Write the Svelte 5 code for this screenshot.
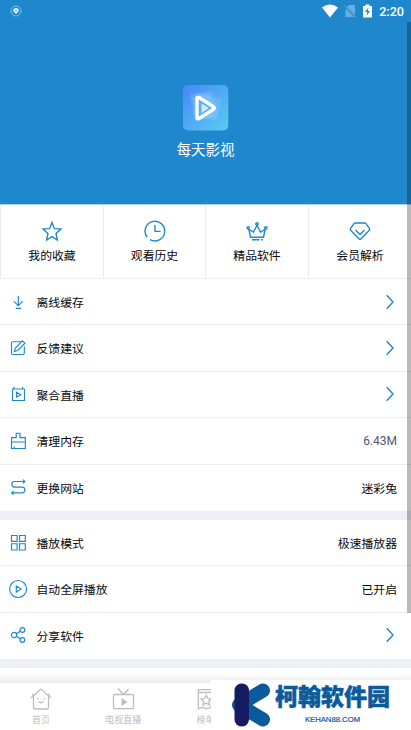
<script>
  const shortcuts = [
    { label: '我的收藏', icon: 'star' },
    { label: '观看历史', icon: 'clock' },
    { label: '精品软件', icon: 'crown' },
    { label: '会员解析', icon: 'gem' },
  ];

  const groups = [
    [
      { label: '离线缓存', icon: 'download' },
      { label: '反馈建议', icon: 'edit' },
      { label: '聚合直播', icon: 'live' },
      { label: '清理内存', icon: 'clean', value: '6.43M', muted: true },
      { label: '更换网站', icon: 'swap', value: '迷彩兔' },
    ],
    [
      { label: '播放模式', icon: 'modes', value: '极速播放器' },
      { label: '自动全屏播放', icon: 'play', value: '已开启' },
      { label: '分享软件', icon: 'share' },
    ],
  ];

  const tabs = [
    { label: '首页', icon: 'home' },
    { label: '电视直播', icon: 'tv' },
    { label: '榜单', icon: 'rank' },
    { label: '', icon: '' },
    { label: '', icon: '' },
  ];

  const icons = {
    star: 'M12 3.500l2.400 6.200 6.600.4-5 4.300 1.400 6.600-5.400-3.400-5.400 3.400 1.400-6.600-5-4.300 6.600-.4z',
    clock: 'M4.200 18.200A9.800 9.800 0 1 1 7 20.600M12 6v6.400h5.500',
    crown: 'M5.500 18.200h13l1.600-7.700-4.500 2.600L12 6.400l-3.600 6.700-4.500-2.600zM7 20.800h7.500M16 20.800h2M10.800 5a1.200 1.200 0 1 0 2.400 0 1.200 1.200 0 1 0-2.400 0M2 8.800a1.200 1.200 0 1 0 2.400 0A1.200 1.200 0 1 0 2 8.800M19.600 8.800a1.200 1.200 0 1 0 2.400 0 1.200 1.200 0 1 0-2.400 0',
    gem: 'M7.500 4h9q1 0 1.500.7l3.500 5q.5.8-.2 1.500l-8.400 8.700q-.9.800-1.800 0L2.700 11.200q-.7-.7-.2-1.500l3.500-5q.5-.7 1.500-.7zM7.500 11l4.500 4.600 4.500-4.600',
    download: 'M12.300 6v9.500M8 11.300l4.300 4.400 4.300-4.400M9.700 18.300h5.300',
    edit: 'M15 5.700H7q-1.500 0-1.500 1.500v9.800q0 1.500 1.500 1.500h9.800q1.500 0 1.500-1.500V10.500M9.300 12.200l7.200-7.300 2.400 2.300-7.200 7.300-3.200 1z',
    live: 'M6.500 7h11.500q.5 0 .5.500v11H6.500zM8 4.800V7M16.500 4.800V7M10.500 10.300v4.800l4.300-2.400z',
    clean: 'M5.500 13V8.600h4.700V4.200h3.800v4.400h5.300V13zM5.500 13v6.500h13.800V13M8.300 19.500v-2',
    swap: 'M19 6.500H8.700a2.800 2.800 0 0 0 0 5.600h7.300a2.900 2.900 0 0 1 0 5.800H5.500M17 4.700L18.900 6.500 17 8.300M7.500 16.100L5.600 17.900l1.900 1.800',
    modes: 'M5.500 4.500h5.600v5.800H5.500zM13.500 4.500h5.800v5.800h-5.800zM5.500 12.700h5.600v6.300H5.500zM13.500 12.700h5.800v6.300h-5.800z',
    play: 'M3.600 12a8.500 8.500 0 1 0 17 0 8.500 8.500 0 1 0-17 0M10.300 9v6.200l4.800-3.100z',
    share: 'M5.500 12a2.600 2.600 0 1 0 5.200 0 2.600 2.600 0 1 0-5.200 0M14 7a2.400 2.400 0 1 0 4.800 0 2.400 2.400 0 1 0-4.800 0M14 17a2.400 2.400 0 1 0 4.800 0 2.400 2.400 0 1 0-4.800 0M10.400 10.700l3.900-2.500M10.400 13.300l3.900 2.500',
    home: 'M2 12L12 3l10 9M4.500 10.500V21q0 2 2 2h11q2 0 2-2V10.500M3.700 9.500V7.500M20.300 9.500V7.500M9 12v1.500M15 12v1.500M9.500 15.500q2.500 2.400 5 0',
    tv: 'M3.500 8.500h18q1 0 1 1v12.200q0 1-1 1h-18q-1 0-1-1V9.500q0-1 1-1zM7 2.500l5.500 6 5-5.500',
    rank: 'M4.300 3.600h16v19.200l-4-1.400-4 1.400-4-1.400-4 1.400zM4.300 6.500h16M12.300 9.200l1.600 3.300 3.600.4-2.700 2.400.8 3.700-3.300-1.900-3.300 1.900.8-3.700-2.700-2.400 3.600-.4z',
  };
</script>

<div class="app">
  <header class="hero">
    <div class="status">
      <svg class="notice" width="12" height="12" viewBox="0 0 12 12">
        <circle cx="6" cy="6" r="5" fill="none" stroke="#8fc8ee" stroke-width=".8" />
        <path d="M3.500 4L6 3l2.500 1v2.500L6 9 3.500 6.500z" fill="#fff" />
        <circle cx="6" cy="5.500" r=".8" fill="#1f88cd" />
      </svg>
      <svg width="16" height="14" viewBox="0 0 16 14">
        <path d="M0 3.500Q8-2.500 16 3.500L8 13.500z" fill="#fff" />
      </svg>
      <svg class="sim" width="12" height="14" viewBox="0 0 12 14">
        <path d="M4.500 1H11v10L3 3zM1.500 4.500L10 13H1.500z" fill="#67afdf" />
        <path d="M.5 1.500l11 11.500" stroke="#67afdf" />
      </svg>
      <svg class="battery" width="9" height="14" viewBox="0 0 9 14">
        <path d="M0 2h2.500V.5h4V2H9v11.500H0z" fill="#fff" />
        <path d="M5.500 3.500L2 8h2.200L3.500 12 7 7H4.800z" fill="#1f88cd" />
      </svg>
      <span class="time">2:20</span>
    </div>
    <svg class="logo" width="46" height="46" viewBox="0 0 46 46">
      <defs>
        <linearGradient id="logo-bg" x1="0" y1="0" x2="1" y2="1">
          <stop offset="0" stop-color="#4a86f8" />
          <stop offset="1" stop-color="#59cdf0" />
        </linearGradient>
      </defs>
      <rect width="45.300" height="45.500" rx="5" fill="url(#logo-bg)" />
      <g fill="#a3d8ff" fill-opacity=".2">
        <path d="M7 9l20-3 4 26-20 3z" />
        <path d="M9 12l21-5 6 24-21 5z" />
        <path d="M15 8l24 6-6 22-23-6z" />
      </g>
      <path d="M14 13.500q0-2 2-1l14.500 9.200q1.600 1.300 0 2.600L16 33.500q-2 1-2-1z" fill="#5aaeff" stroke="#fff" stroke-width="3.400" stroke-linejoin="round" />
      <path d="M18.500 18.500l7.500 4.500-7.500 5z" fill="#d5ecff" />
    </svg>
    <h1>每天影视</h1>
  </header>

  <section class="shortcuts">
    {#each shortcuts as item}
      <div class="shortcut">
        <svg class="icon" width="24" height="24" viewBox="0 0 24 24"><path d={icons[item.icon]} /></svg>
        <span>{item.label}</span>
      </div>
    {/each}
  </section>

  {#each groups as rows}
    <section class="group">
      {#each rows as row}
        <div class="row">
          <svg class="icon thin" width="24" height="24" viewBox="0 0 24 24"><path d={icons[row.icon]} /></svg>
          <span class="label">{row.label}</span>
          {#if row.value}
            <span class="value" class:muted={row.muted}>{row.value}</span>
          {:else}
            <svg class="arrow" width="8" height="16" viewBox="0 0 8 16"><path d="M.7 1.200L7 8 .7 14.800" /></svg>
          {/if}
        </div>
      {/each}
    </section>
  {/each}

  <div class="fade"></div>
  <nav>
    {#each tabs as tab}
      <div class="tab">
        {#if tab.icon}
          <svg width="24" height="26" viewBox="0 0 24 26">
            <path d={icons[tab.icon]} />
            {#if tab.icon === 'tv'}
              <path class="solid" d="M10.500 12v8l6-4z" />
            {/if}
          </svg>
          <span>{tab.label}</span>
        {/if}
      </div>
    {/each}
  </nav>

  <div class="scrollbar"></div>

  <div class="banner">
    <svg width="40" height="44" viewBox="0 0 40 44">
      <path d="M32 7.500L8 22l24 14.500" fill="none" stroke="#0b5a9b" stroke-width="14" stroke-linecap="round" stroke-linejoin="round" />
      <rect x="3.500" y=".5" width="14.500" height="43" rx="7" fill="#171c62" />
    </svg>
    <div class="brand">
      <b>柯翰软件园</b>
      <small>KEHAN88.COM</small>
    </div>
  </div>
</div>

<style>
  :global(body) {
    margin: 0;
    overflow: hidden;
  }

  .app {
    position: relative;
    display: flex;
    flex-direction: column;
    width: 411px;
    height: 730px;
    overflow: hidden;
    background: #fff;
    color: #080808;
    font-family: Roboto, 'Noto Sans CJK SC', sans-serif;
    font-size: 11.85px;
  }

  .hero {
    display: flex;
    flex: none;
    flex-direction: column;
    align-items: center;
    box-sizing: border-box;
    height: 205px;
    border-bottom: 1px solid #a5d1ee;
    background: #1f88cd;
    color: #fff;
  }

  .status {
    display: flex;
    align-items: center;
    box-sizing: border-box;
    width: 100%;
    height: 22px;
    padding: 0 7px 0 10px;
  }

  .notice {
    margin-right: auto;
  }

  .sim {
    margin-left: 6px;
  }

  .battery {
    margin: 0 7px 0 7px;
  }

  .time {
    font-size: 12.6px;
    font-weight: 500;
    line-height: 22px;
    padding-top: 1px;
  }

  .logo {
    margin-top: 63px;
  }

  h1 {
    margin: 9px 0 0;
    font-size: 14.4px;
    font-weight: 400;
    line-height: 22px;
  }

  .shortcuts {
    display: grid;
    flex: none;
    grid-template-columns: 103px 102px 103px 103px;
    box-sizing: border-box;
    height: 74px;
    border-bottom: 1px solid #ebebf0;
  }

  .shortcut {
    display: flex;
    flex-direction: column;
    align-items: center;
    padding-top: 14px;
    border-left: 1px solid #ebebf0;
    line-height: 18px;
  }

  .shortcut span {
    margin-top: 4px;
  }

  .icon {
    fill: none;
    stroke: #1f88cd;
    stroke-width: 1.4;
  }

  .thin {
    stroke-width: 1.15;
  }

  .group {
    flex: none;
    border-bottom: 9px solid #eeeef5;
  }

  .row {
    display: flex;
    align-items: center;
    box-sizing: border-box;
    height: 46.4px;
    padding: 0 14px 0 6px;
    border-bottom: 1px solid #ececef;
  }

  .row:last-child {
    border-bottom-color: #fff;
  }

  .label {
    margin-left: 6.5px;
    margin-right: auto;
  }

  .label,
  .value {
    padding-bottom: 0.5px;
  }

  .muted {
    color: #55556b;
    font-size: 12px;
  }

  .arrow {
    margin-right: 3px;
    fill: none;
    stroke: #1f88cd;
    stroke-width: 1.4;
  }

  .fade {
    flex: none;
    height: 9px;
    margin-top: 6px;
    background: linear-gradient(#fff, #eaeaea);
  }

  nav {
    display: flex;
    flex: 1;
    background: #fff;
  }

  .tab {
    display: flex;
    flex: 1;
    flex-direction: column;
    align-items: center;
    padding-top: 3px;
    color: #bdbdbd;
    font-size: 9px;
    line-height: 14px;
  }

  .tab span {
    margin-top: 1px;
  }

  .tab svg {
    fill: none;
    stroke: #bdbdbd;
    stroke-width: 1.3;
  }

  .tab .solid {
    fill: #bdbdbd;
    stroke: none;
  }

  .scrollbar {
    position: absolute;
    top: 22px;
    right: 0;
    width: 4px;
    height: 591px;
    background: rgba(0, 0, 0, 0.27);
  }

  /* promo badge floating over the tab bar */
  .banner {
    position: absolute;
    right: 0;
    bottom: 0;
    display: flex;
    box-sizing: border-box;
    width: 200px;
    height: 50px;
    padding: 3px 0 0 20px;
    background: #fff;
    color: #0b5a9b;
  }

  .brand {
    display: flex;
    flex-direction: column;
    align-items: center;
    margin-left: 4px;
  }

  .brand b {
    font-size: 23px;
    font-weight: 900;
    line-height: 29px;
    -webkit-text-stroke: 0.5px #0b5a9b;
  }

  .brand small {
    margin-top: 3px;
    font-family: 'Liberation Sans', sans-serif;
    font-size: 7.7px;
    line-height: 10px;
    -webkit-text-stroke: 0.2px #0b5a9b;
  }
</style>
